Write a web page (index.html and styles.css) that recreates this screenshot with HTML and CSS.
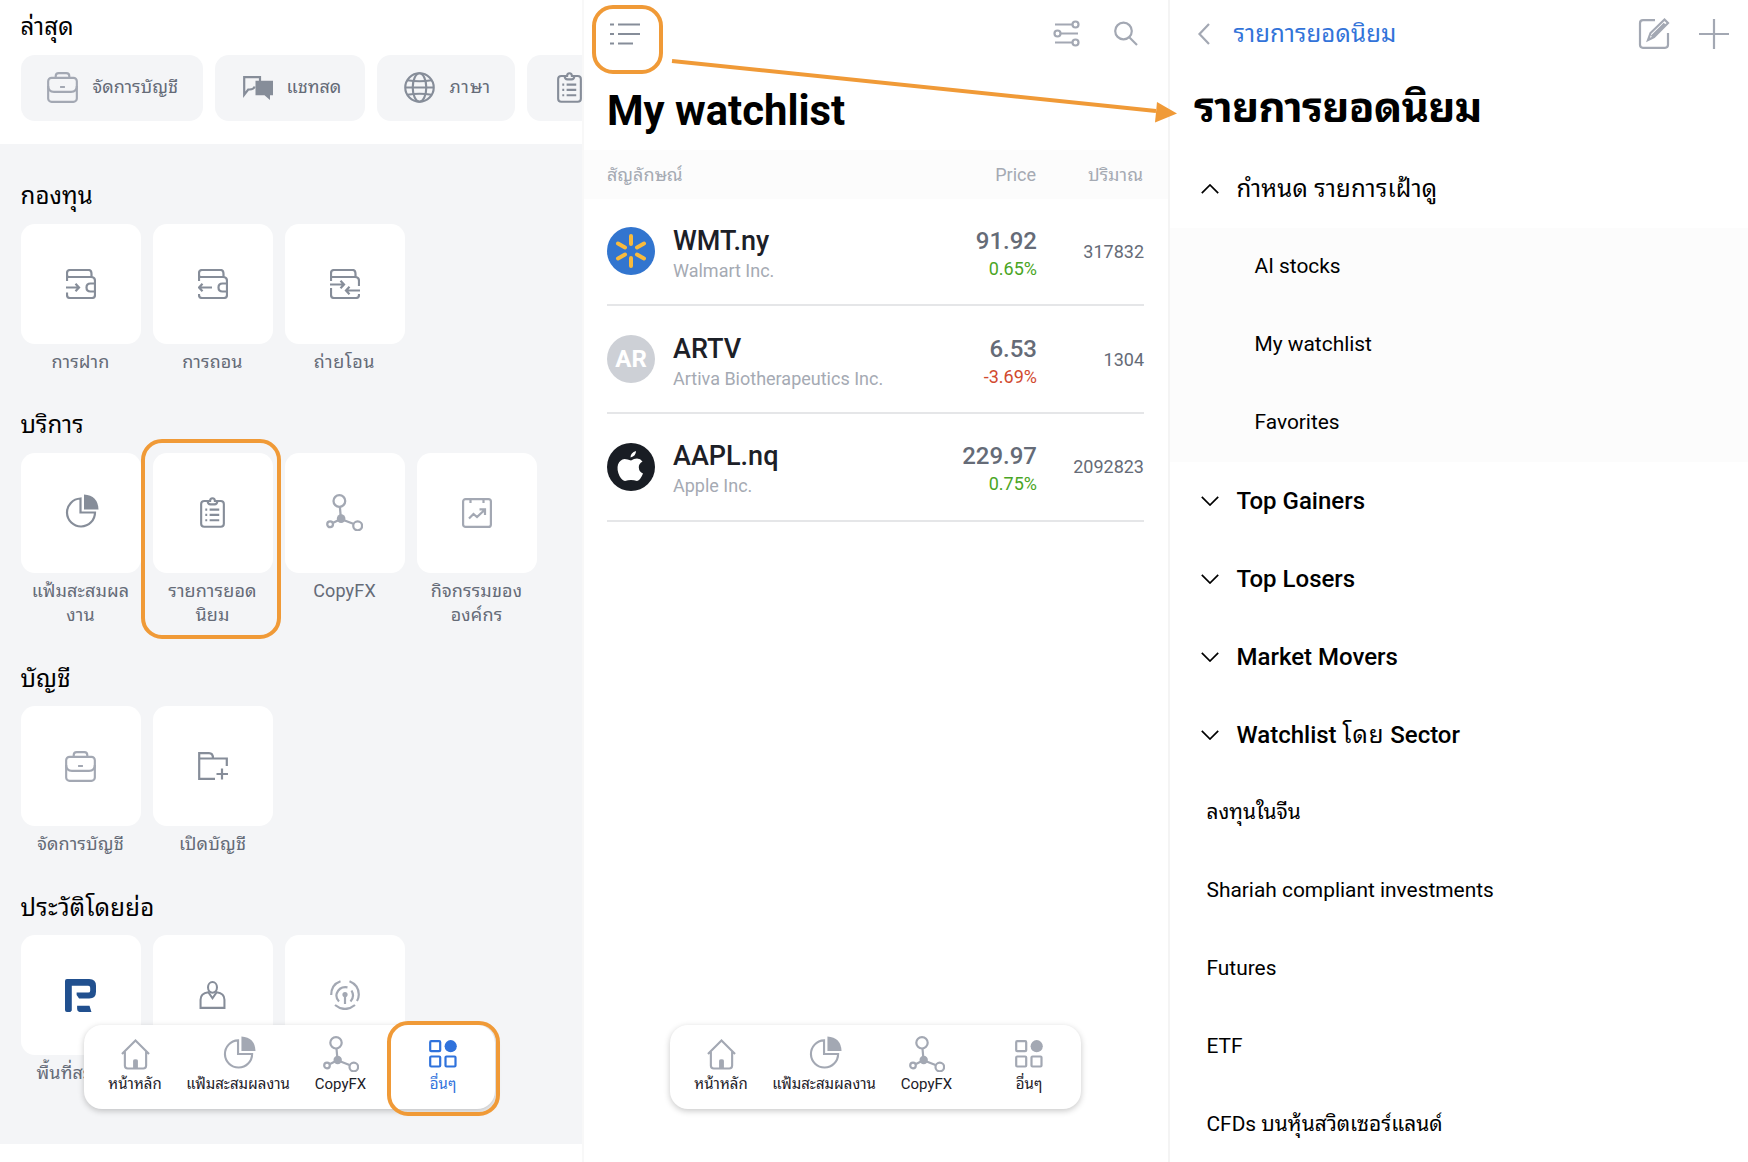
FILE: index.html
```
<!DOCTYPE html>
<html lang="th">
<head>
    <meta charset="UTF-8">
    <meta name="viewport" content="width=device-width, initial-scale=1.0">
    <title>รายการยอดนิยม</title>
    <link rel="stylesheet" href="styles.css">
</head>
<body>
    <!-- shared icons -->
    <svg class="sprite" aria-hidden="true">
        <symbol id="briefcase" viewBox="0 0 32 32">
            <path d="M9 6V4.200q0-3 3-3h8q3 0 3 3V6"/>
            <rect x="1.200" y="6" width="29.600" height="24.800" rx="3.500"/>
            <path d="M1.200 14.500q0 6 6 6h17.600q6 0 6-6M13.500 15.500h5"/>
        </symbol>
        <symbol id="chat" viewBox="0 0 31 24">
            <path d="M17 5V1.200H1.200v17.500l4-5.200h1.500q4 0 5-3"/>
            <path class="solid" d="M12.500 4.800H30v14.500h-3V24l-5.500-4.700h-9z"/>
        </symbol>
        <symbol id="globe" viewBox="0 0 32 32">
            <circle cx="16" cy="16" r="14.700"/>
            <ellipse cx="16" cy="16" rx="7" ry="14.700"/>
            <path d="M1.500 16h29M3.500 8.500q12.500 2 25 0M3.500 23.500q12.500-2 25 0"/>
        </symbol>
        <symbol id="clipboard" viewBox="0 0 26 32">
            <path d="M8 4H4.500Q1.200 4 1.200 7.200v20.400q0 3.200 3.300 3.200h17q3.300 0 3.300-3.200V7.200Q24.800 4 21.500 4H18M8 4q0 3.500 3 3.500h4q3 0 3-3.500h-2.500Q15.500 1.200 13 1.200T10.500 4zM10 13h10M10 18.500h10M10 24h10M5.500 13h2M5.500 18.500h2M5.500 24h2"/>
        </symbol>
        <symbol id="deposit" viewBox="0 0 30 30">
            <path d="M1 12V4q0-3 3-3h18.500q3 0 3 4v3M1 8h24q4 0 4 4v14q0 3-3 3H4q-3 0-3-3v-2.500M28.500 14.500h-4q-4 0-4 4t4 4h4M0 18.500h13M9.500 14.800l3.500 3.700-3.500 3.700M1 6q0 2 2 2"/>
        </symbol>
        <symbol id="withdraw" viewBox="0 0 30 30">
            <path d="M1 12V4q0-3 3-3h18.500q3 0 3 4v3M1 8h24q4 0 4 4v14q0 3-3 3H4q-3 0-3-3v-1M28.500 14.500h-4q-4 0-4 4t4 4h4M14 18.500H1M4.500 14.800L1 18.500l3.500 3.700M1 6q0 2 2 2"/>
        </symbol>
        <symbol id="transfer" viewBox="0 0 30 30">
            <path d="M1 12V4q0-3 3-3h18.500q3 0 3 4v3M1 8h24q4 0 4 4v5M29 25v1q0 3-3 3H4q-3 0-3-3v-7M0 15.500h14M10.500 11.800l3.500 3.700-3.500 3.700M30 21.500H16M19.500 17.800L16 21.500l3.500 3.700"/>
        </symbol>
        <symbol id="pie" viewBox="0 0 34 34">
            <path d="M15.500 4.500A14 14 0 1 0 30 18.500H15.500z"/>
            <path class="solid" d="M19 .5Q33 1.500 33.500 15.500H19z"/>
        </symbol>
        <symbol id="copyfx" viewBox="0 0 36 36">
            <circle cx="13" cy="6.800" r="5.700"/>
            <circle cx="4" cy="29.500" r="2.800"/>
            <circle cx="30.800" cy="31" r="4.300"/>
            <path d="M13.500 12.500l1 11.500M7 28l7-3.500M26.500 29L15 24.500"/>
            <circle class="solid" cx="14.700" cy="24" r="4.200"/>
        </symbol>
        <symbol id="events" viewBox="0 0 30 30">
            <rect x="1.100" y="1.100" width="27.800" height="27.800" rx="2.500"/>
            <path d="M8.500 1v4M21.500 1v4M7 20.500l4.500-4.500 3.500 3 8-7.500M17.500 11.300H23V17"/>
        </symbol>
        <symbol id="folder" viewBox="0 0 30 28">
            <path d="M17 26.800H1.200V1.200H11q4 0 4 5.300M1.200 6.500h27.600V14M24 16.500v11M18.500 22H30"/>
        </symbol>
        <symbol id="brand" viewBox="0 0 32 34">
            <path class="solid" d="M2 0h23q7 0 7 7v6q0 7-7 7H14.500l-2.500-3.500V14h12q2 0 2-2V9q0-2-2-2H7v25.500L5.500 34H2q-2 0-2-2V2q0-2 2-2zM12.500 27.500h12.800l2 6.500H15q-2.500-.5-2.500-3z"/>
        </symbol>
        <symbol id="person" viewBox="0 0 28 30">
            <ellipse cx="14" cy="6.800" rx="4.800" ry="5.700"/>
            <path d="M1.200 28.800V20q0-7 8.300-8l4.500 6.500 4.500-6.500q8.300 1 8.300 8v8.800z"/>
        </symbol>
        <symbol id="signal" viewBox="0 0 30 30">
            <path d="M1.200 15Q1.200 4.500 10.500 1.200M19.500 1.200Q28.800 5 28.800 14.500 28.800 18 27 21M5 25q10 8 20 0M9 21.500Q5.500 18 6.700 13.500 9.500 6 17.500 7.300M21.500 10.500q3.500 6-1 11M15 15v9"/>
            <circle class="solid" cx="15" cy="14.500" r="2.600"/>
        </symbol>
        <symbol id="home" viewBox="0 0 30 32">
            <path d="M1 15.500L15 1.500l14 14M4 13v14.500q0 3 3 3h16q3 0 3-3V13"/>
            <path class="solid" d="M12.500 30v-7.500q0-1.500 2.500-1.500t2.500 1.500V30z"/>
        </symbol>
        <symbol id="more" viewBox="0 0 28 28">
            <rect x="1.200" y="1.200" width="10" height="10" rx="1"/>
            <rect x="1.200" y="16.500" width="10" height="10" rx="1"/>
            <rect x="16.500" y="16.500" width="10" height="10" rx="1"/>
            <circle class="solid" cx="21.700" cy="6.200" r="6.100"/>
        </symbol>
        <symbol id="down" viewBox="0 0 18 10"><path d="M.8.8L9 9 17.200.8"/></symbol>
        <symbol id="up" viewBox="0 0 18 10"><path d="M.8 9.200L9 1l8.200 8.200"/></symbol>
    </svg>

    <div class="screens">
        <!-- more screen -->
        <section class="screen more">
            <div class="recent">
                <h2>ล่าสุด</h2>
                <div class="chips">
                    <div class="chip chip-account"><svg class="icon soft" width="31" height="31"><use href="#briefcase"/></svg><span>จัดการบัญชี</span></div>
                    <div class="chip chip-chat"><svg class="icon" width="31" height="24"><use href="#chat"/></svg><span>แชทสด</span></div>
                    <div class="chip chip-lang"><svg class="icon" width="31" height="31"><use href="#globe"/></svg><span>ภาษา</span></div>
                    <div class="chip chip-list"><svg class="icon" width="25" height="31"><use href="#clipboard"/></svg></div>
                </div>
            </div>
            <div class="sections">
                <div class="section">
                    <h2>กองทุน</h2>
                    <div class="tiles">
                        <div class="tile"><div class="card"><svg class="icon" width="30" height="30"><use href="#deposit"/></svg></div><span>การฝาก</span></div>
                        <div class="tile"><div class="card"><svg class="icon" width="30" height="30"><use href="#withdraw"/></svg></div><span>การถอน</span></div>
                        <div class="tile"><div class="card"><svg class="icon" width="30" height="30"><use href="#transfer"/></svg></div><span class="w-transfer">ถ่ายโอน</span></div>
                    </div>
                </div>
                <div class="section tall">
                    <h2>บริการ</h2>
                    <div class="tiles">
                        <div class="tile"><div class="card"><svg class="icon pie" width="34" height="34"><use href="#pie"/></svg></div><span>แฟ้มสะสมผล<br>งาน</span></div>
                        <div class="tile"><div class="card"><svg class="icon" width="25" height="31"><use href="#clipboard"/></svg></div><span>รายการยอด<br>นิยม</span><i class="mark mark-tile"></i></div>
                        <div class="tile"><div class="card"><svg class="icon soft" width="37" height="37"><use href="#copyfx"/></svg></div><span>CopyFX</span></div>
                        <div class="tile"><div class="card"><svg class="icon soft" width="30" height="30"><use href="#events"/></svg></div><span>กิจกรรมของ<br>องค์กร</span></div>
                    </div>
                </div>
                <div class="section">
                    <h2>บัญชี</h2>
                    <div class="tiles">
                        <div class="tile"><div class="card"><svg class="icon soft" width="31" height="31"><use href="#briefcase"/></svg></div><span>จัดการบัญชี</span></div>
                        <div class="tile"><div class="card"><svg class="icon" width="30" height="28"><use href="#folder"/></svg></div><span>เปิดบัญชี</span></div>
                    </div>
                </div>
                <div class="section">
                    <h2 class="h-profile">ประวัติโดยย่อ</h2>
                    <div class="tiles">
                        <div class="tile"><div class="card"><svg class="icon brand" width="31" height="33"><use href="#brand"/></svg></div><span class="cut">พื้นที่สะ</span></div>
                        <div class="tile"><div class="card"><svg class="icon" width="27" height="28"><use href="#person"/></svg></div></div>
                        <div class="tile"><div class="card"><svg class="icon soft" width="30" height="30"><use href="#signal"/></svg></div></div>
                    </div>
                </div>
            </div>
            <nav class="tabbar">
                <div class="tab tab-home"><svg class="icon soft" width="29" height="31"><use href="#home"/></svg><span>หน้าหลัก</span></div>
                <div class="tab tab-pie"><svg class="icon soft" width="33" height="33"><use href="#pie"/></svg><span>แฟ้มสะสมผลงาน</span></div>
                <div class="tab tab-copy"><svg class="icon soft" width="36" height="36"><use href="#copyfx"/></svg><span>CopyFX</span></div>
                <div class="tab tab-more active"><svg class="icon" width="28" height="28"><use href="#more"/></svg><span>อื่นๆ</span></div>
                <i class="mark mark-tab"></i>
            </nav>
        </section>

        <!-- watchlist screen -->
        <section class="screen watch">
            <div class="topbar">
                <svg class="icon" width="30" height="22"><path d="M0 1.500h4M8 1.500h22M0 11h4M8 11h22M0 20.500h4M8 20.500h15"/></svg>
                <i class="mark mark-menu"></i>
                <svg class="icon soft settings" width="27" height="27"><circle cx="22.500" cy="4.500" r="3"/><circle cx="4.500" cy="13.500" r="3"/><circle cx="22.500" cy="22.500" r="3"/><path d="M2 4.500h17M8 13.500h17M2 22.500h17"/></svg>
                <svg class="icon soft" width="24" height="24"><circle cx="9.500" cy="9" r="8.300"/><path d="M15 15l8 8"/></svg>
            </div>
            <h1>My watchlist</h1>
            <div class="thead"><span class="c-name">สัญลักษณ์</span><span class="c-price">Price</span><span class="c-vol">ปริมาณ</span></div>
            <div class="rows">
                <div class="row">
                    <svg width="48" height="48" viewBox="0 0 48 48"><circle cx="24" cy="24" r="24" fill="#3275cf"/><path d="M24 9v8M24 31v8M11 16.500l7 4M30 27.500l7 4M37 16.500l-7 4M18 27.500l-7 4" stroke="#f8ba3c" stroke-width="4" stroke-linecap="round"/></svg>
                    <div class="c-name"><b>WMT.ny</b><small>Walmart Inc.</small></div>
                    <div class="c-price"><b>91.92</b><small class="gain">0.65%</small></div>
                    <div class="c-vol">317832</div>
                </div>
                <div class="row">
                    <div class="avatar">AR</div>
                    <div class="c-name"><b>ARTV</b><small>Artiva Biotherapeutics Inc.</small></div>
                    <div class="c-price"><b>6.53</b><small class="loss">-3.69%</small></div>
                    <div class="c-vol">1304</div>
                </div>
                <div class="row">
                    <svg width="48" height="48" viewBox="0 0 48 48"><circle cx="24" cy="24" r="24" fill="#191d24"/><path d="M23.500 14.500q0-5 5.500-6.500 0 5-5.500 6.500zM24 17.500q3-2 6-2 3.500.2 5.500 3-4 2.500-3.700 6 .3 4.500 4.200 6Q33.500 37 30 38q-3-1-6-1t-6 1q-3-.5-5.500-5-3-6.500-1.500-11.500 2-5 6.500-5.500 3 0 6.500 1.500z" fill="#fff"/></svg>
                    <div class="c-name"><b>AAPL.nq</b><small>Apple Inc.</small></div>
                    <div class="c-price"><b>229.97</b><small class="gain">0.75%</small></div>
                    <div class="c-vol">2092823</div>
                </div>
            </div>
            <nav class="tabbar">
                <div class="tab tab-home"><svg class="icon soft" width="29" height="31"><use href="#home"/></svg><span>หน้าหลัก</span></div>
                <div class="tab tab-pie"><svg class="icon soft" width="33" height="33"><use href="#pie"/></svg><span>แฟ้มสะสมผลงาน</span></div>
                <div class="tab tab-copy"><svg class="icon soft" width="36" height="36"><use href="#copyfx"/></svg><span>CopyFX</span></div>
                <div class="tab tab-more"><svg class="icon soft" width="28" height="28"><use href="#more"/></svg><span>อื่นๆ</span></div>
            </nav>
        </section>

        <!-- favourites screen -->
        <section class="screen lists">
            <div class="topbar">
                <svg class="icon soft" width="12" height="20"><path d="M11 0L1.500 10l9.500 10"/></svg>
                <span class="back">รายการยอดนิยม</span>
                <svg class="icon soft edit" width="30" height="30"><path d="M16 1.200H4q-3 0-3 3v21.600q0 3 3 3h22q3 0 3-3V14M9 21l2.500-7L25.500.5l3.500 3.500-14 14zM12.500 17.500L25.500 4.500"/></svg>
                <svg class="icon soft" width="30" height="30"><path d="M15 0v30M0 15h30"/></svg>
            </div>
            <h1>รายการยอดนิยม</h1>
            <div class="group custom"><svg class="icon dark" width="18" height="10"><use href="#up"/></svg><span>กำหนด รายการเฝ้าดู</span></div>
            <div class="sub">
                <div>AI stocks</div>
                <div>My watchlist</div>
                <div>Favorites</div>
            </div>
            <div class="group"><svg class="icon dark" width="18" height="10"><use href="#down"/></svg><span>Top Gainers</span></div>
            <div class="group"><svg class="icon dark" width="18" height="10"><use href="#down"/></svg><span>Top Losers</span></div>
            <div class="group"><svg class="icon dark" width="18" height="10"><use href="#down"/></svg><span>Market Movers</span></div>
            <div class="group"><svg class="icon dark" width="18" height="10"><use href="#down"/></svg><span>Watchlist <em>โดย</em> Sector</span></div>
            <div class="plain">
                <div>ลงทุนในจีน</div>
                <div>Shariah compliant investments</div>
                <div>Futures</div>
                <div>ETF</div>
                <div>CFDs บนหุ้นสวิตเซอร์แลนด์</div>
            </div>
        </section>

        <svg class="arrow" width="508" height="66" viewBox="0 0 508 66"><path d="M1 7l484 50" stroke="#f09a37" stroke-width="4"/><path d="M486 48l20 11.500-22 9z" fill="#f09a37"/></svg>
    </div>
</body>
</html>
```
FILE: styles.css
```
* {
    box-sizing: border-box;
}
body {
    margin: 0;
    font-family: Roboto, "Noto Sans Thai Looped", "Noto Looped Thai", Loma, Garuda, Waree, Umpush, FreeSans, "Noto Serif Thai", sans-serif;
    background: #fff;
    color: #000;
}
h1, h2 {
    margin: 0;
}
.sprite {
    display: none;
}
.screens {
    position: relative;
    display: flex;
    height: 1162px;
    overflow: hidden;
}
.screen {
    position: relative;
    height: 1162px;
    overflow: hidden;
    flex: none;
}
.more {
    width: 584px;
    border-right: 2px solid #f8f8f8;
}
.watch {
    width: 586px;
    border-right: 2px solid #f4f4f4;
}
.lists {
    width: 578px;
}

/* icons */
.icon {
    flex: none;
    fill: none;
    stroke: #868d99;
    stroke-width: 2.2;
    overflow: visible;
    color: #868d99;
}
.icon.soft {
    stroke: #a3a8b3;
    color: #a3a8b3;
}
.icon.dark {
    stroke: #000;
    stroke-width: 1.7;
}
.icon.brand {
    stroke: none;
    color: #21508f;
}
.solid {
    fill: currentColor;
    stroke: none;
}

/* orange highlight frames */
.mark {
    position: absolute;
    border: 4px solid #f09a37;
    border-radius: 21px;
    z-index: 3;
}
.mark-tile {
    top: -13.5px;
    left: -11.5px;
    width: 140px;
    height: 200px;
}
.mark-tab {
    top: -4px;
    left: 303px;
    width: 113px;
    height: 95px;
}
.mark-menu {
    top: 5px;
    left: 8px;
    width: 71px;
    height: 69px;
}
.arrow {
    position: absolute;
    top: 54px;
    left: 671px;
    overflow: visible;
}

/* more screen */
.recent {
    height: 144px;
    padding: 8px 0 0 20.5px;
}
h2 {
    font-size: 24px;
    font-weight: 450;
    line-height: 38px;
    letter-spacing: 0.1px;
    white-space: nowrap;
}
.h-profile {
    letter-spacing: 0.3px;
}
.chips {
    display: flex;
    gap: 12px;
    margin-top: 8.5px;
}
.chip {
    flex: none;
    display: flex;
    align-items: center;
    height: 66px;
    border-radius: 14px;
    background: #f4f5f7;
    font-size: 18px;
    line-height: 24px;
    color: #656b77;
}
.chip span {
    margin-top: -1px;
}
.chip-account { width: 182px; padding-left: 26px; gap: 15px; }
.chip-chat { width: 150px; padding-left: 28px; gap: 13px; }
.chip-lang { width: 138px; padding-left: 27px; gap: 15px; letter-spacing: 0.8px; }
.chip-list { width: 160px; padding-left: 30px; }
.sections {
    height: 1000px;
    padding: 33px 0 0 20.5px;
    background: #f4f5f7;
    overflow: hidden;
}
.section {
    height: 229.3px;
}
.section.tall {
    height: 253.3px;
}
.tiles {
    display: flex;
    gap: 12px;
    margin-top: 8.5px;
}
.tile {
    position: relative;
    width: 120px;
    text-align: center;
    font-size: 18px;
    line-height: 24px;
    color: #656b77;
    white-space: nowrap;
}
.tile > span {
    display: block;
    margin-top: 6px;
    letter-spacing: 0.15px;
}
.tile > .w-transfer {
    letter-spacing: 0.6px;
}
.tile > .cut {
    padding-left: 16px;
    text-align: left;
}
.card {
    display: flex;
    align-items: center;
    justify-content: center;
    height: 120px;
    border-radius: 14px;
    background: #fff;
}
.card .pie {
    margin: -3px 0 0 2px;
}

/* floating tab bar */
.tabbar {
    position: absolute;
    top: 1024.5px;
    left: 84px;
    width: 411px;
    height: 84px;
    border-radius: 18px;
    background: #fff;
    box-shadow: 0 2px 6px rgba(0,0,0,0.22);
    display: flex;
}
.watch .tabbar {
    left: 86px;
}
.tab {
    display: flex;
    flex-direction: column;
    align-items: center;
    font-size: 15px;
    line-height: 20px;
    color: #1c2027;
    white-space: nowrap;
}
.tab svg {
    margin-top: auto;
    margin-bottom: 4px;
}
.tab span {
    margin-bottom: 15px;
}
.tab-home { width: 102px; }
.tab-pie { width: 104px; }
.tab-copy { width: 101px; }
.tab-more { width: 104px; }
.tab-pie svg { margin-left: 2px; margin-bottom: 5px; }
.tab-copy svg { margin-bottom: 2px; }
.tab-more svg { margin-bottom: 6px; }
.tab.active, .tab.active .icon {
    color: #2f72dc;
    stroke: #2f72dc;
}
.tab.active span {
    stroke: none;
}

/* watchlist screen */
.topbar {
    display: flex;
    align-items: center;
    height: 67px;
}
.watch .topbar {
    padding: 0 30px 0 26px;
}
.settings {
    margin: 0 34.5px 0 auto;
}
.watch h1 {
    height: 83px;
    padding-left: 23px;
    font-size: 41.8px;
    font-weight: 700;
    line-height: 88px;
}
.thead {
    display: flex;
    height: 48.5px;
    padding: 0 25px 0 23px;
    background: #fcfcfc;
    font-size: 18px;
    line-height: 49px;
    color: #a5aab3;
}
.c-name {
    flex: 1;
}
.c-price {
    text-align: right;
}
.c-vol {
    width: 107px;
    text-align: right;
}
.rows {
    padding: 0 24px 0 23px;
}
.row {
    display: flex;
    align-items: center;
    height: 107.8px;
    border-bottom: 2px solid #e5e6e8;
    color: #656b77;
    font-size: 18px;
}
.row svg, .avatar {
    flex: none;
    width: 48px;
    height: 48px;
    margin-right: 18px;
}
.avatar {
    border-radius: 50%;
    background: #cdd0d6;
    color: #fff;
    font-size: 24px;
    font-weight: 700;
    line-height: 48px;
    text-align: center;
}
.row b, .row small {
    display: block;
    font-weight: 500;
}
.row .c-name {
    padding-top: 4px;
}
.row .c-name b {
    color: #1c2027;
    font-size: 27px;
    line-height: 34px;
}
.row .c-name small {
    line-height: 25px;
}
.row .c-price {
    margin-right: 2px;
    padding-top: 1px;
}
.row .c-vol {
    width: 105px;
}
.row .c-price b {
    font-size: 24px;
    line-height: 34px;
}
.row small {
    font-size: 18px;
    font-weight: 400;
    line-height: 22px;
    color: #a5aab3;
}
.row .gain { color: #4aa524; }
.row .loss { color: #d1492e; }

/* favourites screen */
.lists .topbar {
    padding: 0 19.5px 0 27.5px;
}
.back {
    margin-left: 24px;
    font-size: 24px;
    line-height: 30px;
    letter-spacing: 0.15px;
    color: #3273d9;
}
.edit {
    margin: 0 30px 0 auto;
}
.lists h1 {
    height: 83px;
    padding-left: 24px;
    font-size: 42px;
    line-height: 82px;
    letter-spacing: -0.75px;
    white-space: nowrap;
}
.group {
    display: flex;
    align-items: center;
    height: 78px;
    padding-left: 30.5px;
    gap: 18px;
    font-size: 24px;
    font-weight: 500;
    line-height: 30px;
    white-space: nowrap;
}
.custom {
    font-weight: 400;
    letter-spacing: 0.2px;
}
.group em {
    font-style: normal;
    font-weight: 400;
    letter-spacing: 0.9px;
}
.sub {
    background: #fcfcfc;
}
.sub div, .plain div {
    display: flex;
    align-items: center;
    height: 78px;
    padding: 0 0 2px 84.5px;
    font-size: 20.9px;
    line-height: 26px;
    white-space: nowrap;
}
.plain div {
    padding-left: 36.5px;
}
```
